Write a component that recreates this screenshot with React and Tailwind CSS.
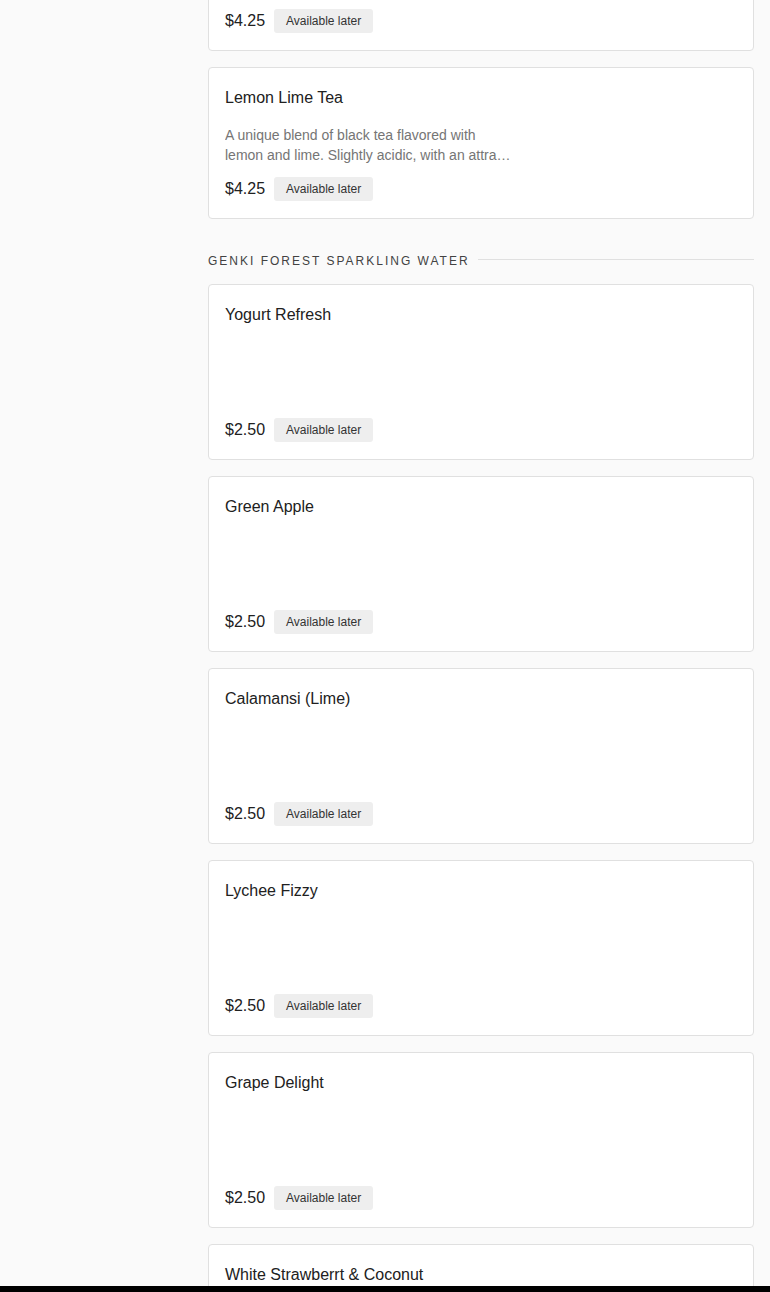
import React from "react";

const sections = [
  {
    name: null,
    items: [
      {
        id: "honey-citron",
        title: "Honey Citron Tea",
        desc: [
          "A soothing blend of black tea with honey",
          "and citron. Sweet and tangy, with a bright citrus finish.",
        ],
        price: "$4.25",
      },
      {
        id: "lemon-lime",
        title: "Lemon Lime Tea",
        desc: [
          "A unique blend of black tea flavored with",
          "lemon and lime. Slightly acidic, with an attractive fragrance.",
        ],
        price: "$4.25",
      },
    ],
  },
  {
    name: "Genki Forest Sparkling Water",
    items: [
      { id: "yogurt", title: "Yogurt Refresh", price: "$2.50" },
      { id: "apple", title: "Green Apple", price: "$2.50" },
      { id: "calamansi", title: "Calamansi (Lime)", price: "$2.50" },
      { id: "lychee", title: "Lychee Fizzy", price: "$2.50" },
      { id: "grape", title: "Grape Delight", price: "$2.50" },
      { id: "strawberry", title: "White Strawberrt & Coconut", price: "$2.50" },
    ],
  },
];

function MenuCard({ item }) {
  return (
    <div className="bg-white border border-[#e0e0e0] rounded-[4px] px-4 pt-[18px] pb-[17px]">
      <h3 className="text-base leading-6 text-[#212121]">{item.title}</h3>
      {item.desc ? (
        <div className="mt-[15px] w-[288px] text-sm leading-5 text-[#757575]">
          <p className="whitespace-nowrap overflow-hidden">{item.desc[0]}</p>
          <p className="truncate">{item.desc[1]}</p>
        </div>
      ) : (
        <div className="h-[91px]" />
      )}
      <div className={`flex items-center ${item.desc ? "mt-[12px]" : ""}`}>
        <span className="text-base leading-6 text-[#212121]">{item.price}</span>
        <span className="ml-[9px] h-6 px-3 flex items-center rounded-[3px] bg-[#eeeeee] text-xs text-[#333333]">
          Available later
        </span>
      </div>
    </div>
  );
}

export default function App() {
  return (
    <div className="h-[1292px] flex flex-col bg-[#fafafa] overflow-hidden font-['Liberation_Sans',Arial,sans-serif]">
      <div className="flex-1 flex overflow-hidden">
        {/* Left rail */}
        <aside className="w-[208px] shrink-0" />

        {/* Menu */}
        <main className="flex-1 pr-4">
          <div className="-mt-[101px]">
            {sections.map((section) => (
              <section key={section.name || "tea"}>
                {section.name && (
                  <div className="flex items-start mt-[34px] mb-[15px]">
                    <h2 className="text-xs leading-4 uppercase tracking-[2px] text-[#424242] whitespace-nowrap">
                      {section.name}
                    </h2>
                    <div className="flex-1 h-px bg-[#e0e0e0] mt-[6px] ml-[8px]" />
                  </div>
                )}
                <div className="flex flex-col gap-4">
                  {section.items.map((item) => (
                    <MenuCard key={item.id} item={item} />
                  ))}
                </div>
              </section>
            ))}
          </div>
        </main>
      </div>

      {/* bottom bar */}
      <div className="h-[6px] shrink-0 bg-black" />
    </div>
  );
}
